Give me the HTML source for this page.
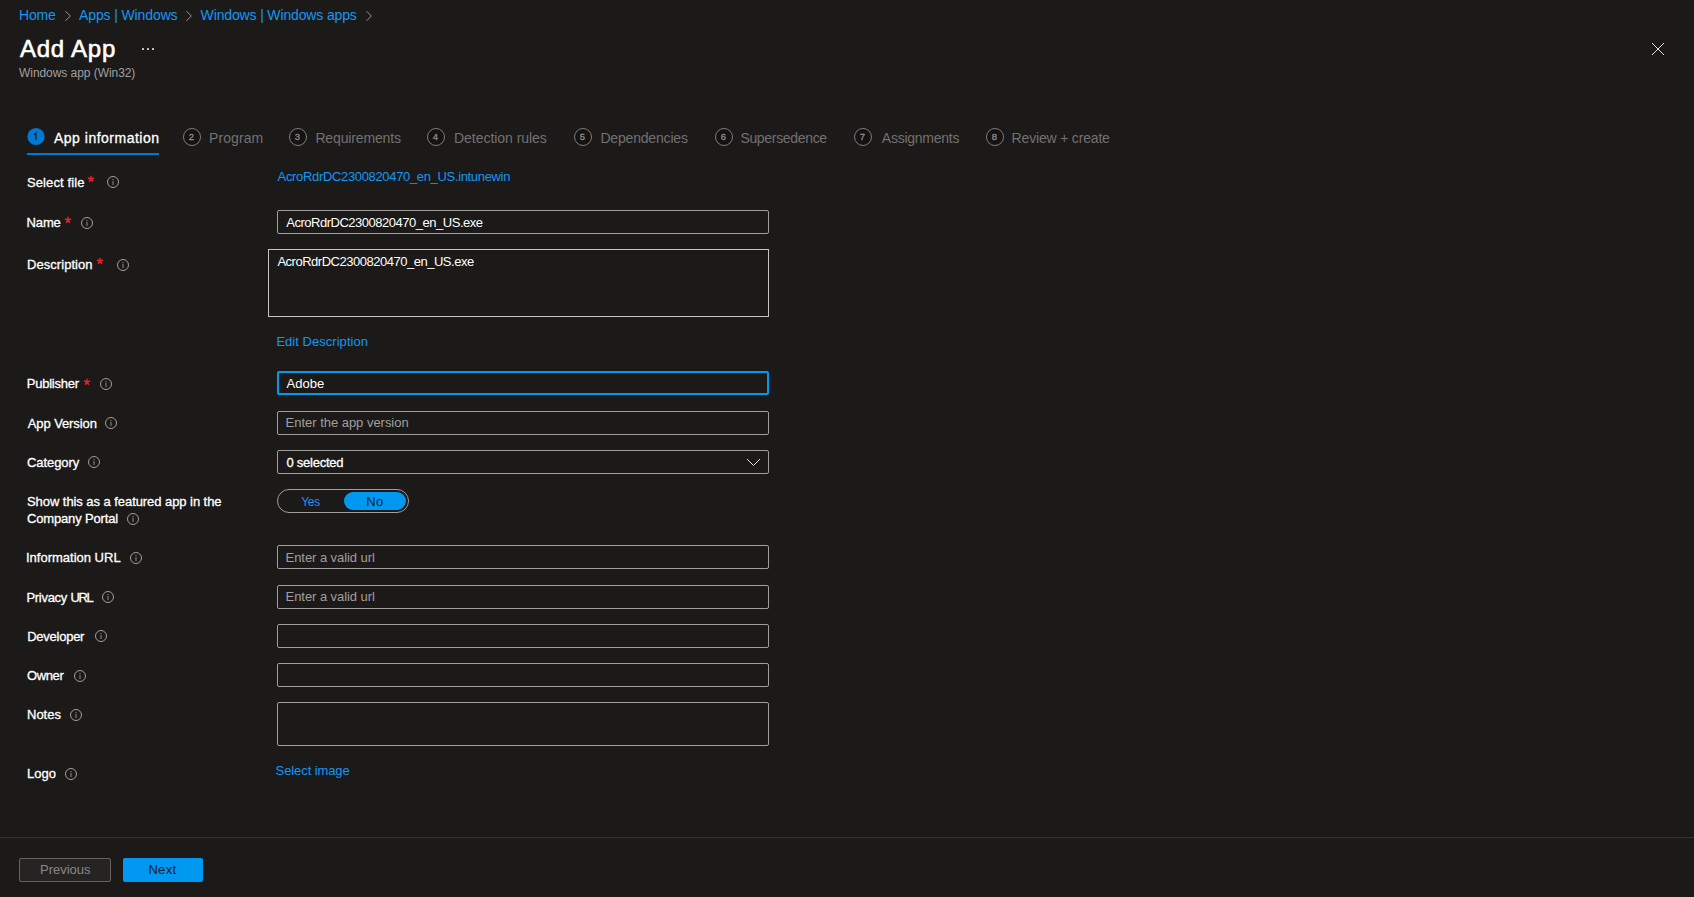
<!DOCTYPE html>
<html><head><meta charset="utf-8">
<style>
html,body{margin:0;padding:0;}
body{width:1694px;height:897px;overflow:hidden;background:#1b1a19;position:relative;font-family:"Liberation Sans",sans-serif;color:#fff;}
.a{position:absolute;box-sizing:content-box;}
.t{position:absolute;white-space:nowrap;line-height:20px;}
</style></head>
<body>
<svg class="a" style="left:64px;top:10px" width="8" height="12" viewBox="0 0 8 12"><path d="M1.5 1.2 L6.3 6 L1.5 10.8" fill="none" stroke="#a8a6a4" stroke-width="0.9"/></svg>
<svg class="a" style="left:185px;top:10px" width="8" height="12" viewBox="0 0 8 12"><path d="M1.5 1.2 L6.3 6 L1.5 10.8" fill="none" stroke="#a8a6a4" stroke-width="0.9"/></svg>
<svg class="a" style="left:365px;top:10px" width="8" height="12" viewBox="0 0 8 12"><path d="M1.5 1.2 L6.3 6 L1.5 10.8" fill="none" stroke="#a8a6a4" stroke-width="0.9"/></svg>
<div class="a" style="left:142px;top:48px;width:12px;height:2px;">
 <span style="position:absolute;left:0;top:0;width:1.6px;height:1.8px;background:#d0cecc;border-radius:0.5px"></span>
 <span style="position:absolute;left:5px;top:0;width:1.6px;height:1.8px;background:#d0cecc;border-radius:0.5px"></span>
 <span style="position:absolute;left:10px;top:0;width:1.6px;height:1.8px;background:#d0cecc;border-radius:0.5px"></span>
</div>
<svg class="a" style="left:1651px;top:42px" width="14" height="14" viewBox="0 0 14 14"><path d="M1 1 L13 13 M13 1 L1 13" stroke="#e1dfdd" stroke-width="1" fill="none"/></svg>
<svg class="a" style="left:26px;top:127px" width="20" height="20" viewBox="0 0 20 20"><circle cx="10" cy="9.5" r="8.6" fill="#0078d4"/><path d="M7.9 7.8 L9.8 6.1 L9.8 13" fill="none" stroke="#1b1a19" stroke-width="1.3"/></svg>
<div class="a" style="left:27px;top:153px;width:132px;height:2px;background:#0078d4"></div>
<div class="a" style="left:183px;top:128px;width:16px;height:16px;border:1px solid #7f7d7b;background:#141312;border-radius:50%"></div>
<div class="t" style="left:182.5px;top:126.6px;width:18px;text-align:center;font-size:9.5px;font-weight:400;-webkit-text-stroke:0.3px #8f8d8b;color:#8f8d8b">2</div>
<div class="a" style="left:289px;top:128px;width:16px;height:16px;border:1px solid #7f7d7b;background:#141312;border-radius:50%"></div>
<div class="t" style="left:288.5px;top:126.6px;width:18px;text-align:center;font-size:9.5px;font-weight:400;-webkit-text-stroke:0.3px #8f8d8b;color:#8f8d8b">3</div>
<div class="a" style="left:427px;top:128px;width:16px;height:16px;border:1px solid #7f7d7b;background:#141312;border-radius:50%"></div>
<div class="t" style="left:426.5px;top:126.6px;width:18px;text-align:center;font-size:9.5px;font-weight:400;-webkit-text-stroke:0.3px #8f8d8b;color:#8f8d8b">4</div>
<div class="a" style="left:574px;top:128px;width:16px;height:16px;border:1px solid #7f7d7b;background:#141312;border-radius:50%"></div>
<div class="t" style="left:573.5px;top:126.6px;width:18px;text-align:center;font-size:9.5px;font-weight:400;-webkit-text-stroke:0.3px #8f8d8b;color:#8f8d8b">5</div>
<div class="a" style="left:715px;top:128px;width:16px;height:16px;border:1px solid #7f7d7b;background:#141312;border-radius:50%"></div>
<div class="t" style="left:714.5px;top:126.6px;width:18px;text-align:center;font-size:9.5px;font-weight:400;-webkit-text-stroke:0.3px #8f8d8b;color:#8f8d8b">6</div>
<div class="a" style="left:854px;top:128px;width:16px;height:16px;border:1px solid #7f7d7b;background:#141312;border-radius:50%"></div>
<div class="t" style="left:853.5px;top:126.6px;width:18px;text-align:center;font-size:9.5px;font-weight:400;-webkit-text-stroke:0.3px #8f8d8b;color:#8f8d8b">7</div>
<div class="a" style="left:986px;top:128px;width:16px;height:16px;border:1px solid #7f7d7b;background:#141312;border-radius:50%"></div>
<div class="t" style="left:985.5px;top:126.6px;width:18px;text-align:center;font-size:9.5px;font-weight:400;-webkit-text-stroke:0.3px #8f8d8b;color:#8f8d8b">8</div>
<div class="a" style="left:277px;top:210px;width:490px;height:22px;border:1px solid #a19f9d;border-radius:2px;background:transparent"></div>
<div class="a" style="left:268px;top:249px;width:499px;height:66px;border:1px solid #c8c6c4;border-radius:0px;background:transparent"></div>
<div class="a" style="left:277px;top:371px;width:488px;height:20px;border:2px solid #0099ee;border-radius:2px;background:transparent"></div>
<div class="a" style="left:277px;top:411px;width:490px;height:22px;border:1px solid #a19f9d;border-radius:2px;background:transparent"></div>
<div class="a" style="left:277px;top:450px;width:490px;height:22px;border:1px solid #a19f9d;border-radius:2px;background:transparent"></div>
<svg class="a" style="left:745px;top:457px" width="17" height="11" viewBox="0 0 17 11"><path d="M2 2 L8.5 8.5 L15 2" fill="none" stroke="#e1dfdd" stroke-width="1"/></svg>
<div class="a" style="left:277px;top:489px;width:130px;height:22px;border:1px solid #a19f9d;border-radius:12px;background:transparent"></div>
<div class="a" style="left:344px;top:492px;width:62px;height:18px;border-radius:9px;background:#0098f0"></div>
<div class="a" style="left:277px;top:545px;width:490px;height:22px;border:1px solid #a19f9d;border-radius:2px;background:transparent"></div>
<div class="a" style="left:277px;top:585px;width:490px;height:22px;border:1px solid #a19f9d;border-radius:2px;background:transparent"></div>
<div class="a" style="left:277px;top:624px;width:490px;height:22px;border:1px solid #a19f9d;border-radius:2px;background:transparent"></div>
<div class="a" style="left:277px;top:663px;width:490px;height:22px;border:1px solid #a19f9d;border-radius:2px;background:transparent"></div>
<div class="a" style="left:277px;top:702px;width:490px;height:42px;border:1px solid #a19f9d;border-radius:2px;background:transparent"></div>
<svg class="a" style="left:107px;top:176px" width="12" height="12" viewBox="0 0 12 12"><circle cx="6" cy="6" r="5.5" fill="none" stroke="#a19f9d" stroke-width="1"/><rect x="5.25" y="5" width="1.5" height="4" fill="#686664"/><rect x="5.25" y="3" width="1.5" height="1.2" fill="#686664"/></svg>
<svg class="a" style="left:81px;top:217px" width="12" height="12" viewBox="0 0 12 12"><circle cx="6" cy="6" r="5.5" fill="none" stroke="#a19f9d" stroke-width="1"/><rect x="5.25" y="5" width="1.5" height="4" fill="#686664"/><rect x="5.25" y="3" width="1.5" height="1.2" fill="#686664"/></svg>
<svg class="a" style="left:117px;top:259px" width="12" height="12" viewBox="0 0 12 12"><circle cx="6" cy="6" r="5.5" fill="none" stroke="#a19f9d" stroke-width="1"/><rect x="5.25" y="5" width="1.5" height="4" fill="#686664"/><rect x="5.25" y="3" width="1.5" height="1.2" fill="#686664"/></svg>
<svg class="a" style="left:100px;top:378px" width="12" height="12" viewBox="0 0 12 12"><circle cx="6" cy="6" r="5.5" fill="none" stroke="#a19f9d" stroke-width="1"/><rect x="5.25" y="5" width="1.5" height="4" fill="#686664"/><rect x="5.25" y="3" width="1.5" height="1.2" fill="#686664"/></svg>
<svg class="a" style="left:105px;top:417px" width="12" height="12" viewBox="0 0 12 12"><circle cx="6" cy="6" r="5.5" fill="none" stroke="#a19f9d" stroke-width="1"/><rect x="5.25" y="5" width="1.5" height="4" fill="#686664"/><rect x="5.25" y="3" width="1.5" height="1.2" fill="#686664"/></svg>
<svg class="a" style="left:88px;top:456px" width="12" height="12" viewBox="0 0 12 12"><circle cx="6" cy="6" r="5.5" fill="none" stroke="#a19f9d" stroke-width="1"/><rect x="5.25" y="5" width="1.5" height="4" fill="#686664"/><rect x="5.25" y="3" width="1.5" height="1.2" fill="#686664"/></svg>
<svg class="a" style="left:127px;top:513px" width="12" height="12" viewBox="0 0 12 12"><circle cx="6" cy="6" r="5.5" fill="none" stroke="#a19f9d" stroke-width="1"/><rect x="5.25" y="5" width="1.5" height="4" fill="#686664"/><rect x="5.25" y="3" width="1.5" height="1.2" fill="#686664"/></svg>
<svg class="a" style="left:130px;top:552px" width="12" height="12" viewBox="0 0 12 12"><circle cx="6" cy="6" r="5.5" fill="none" stroke="#a19f9d" stroke-width="1"/><rect x="5.25" y="5" width="1.5" height="4" fill="#686664"/><rect x="5.25" y="3" width="1.5" height="1.2" fill="#686664"/></svg>
<svg class="a" style="left:102px;top:591px" width="12" height="12" viewBox="0 0 12 12"><circle cx="6" cy="6" r="5.5" fill="none" stroke="#a19f9d" stroke-width="1"/><rect x="5.25" y="5" width="1.5" height="4" fill="#686664"/><rect x="5.25" y="3" width="1.5" height="1.2" fill="#686664"/></svg>
<svg class="a" style="left:95px;top:630px" width="12" height="12" viewBox="0 0 12 12"><circle cx="6" cy="6" r="5.5" fill="none" stroke="#a19f9d" stroke-width="1"/><rect x="5.25" y="5" width="1.5" height="4" fill="#686664"/><rect x="5.25" y="3" width="1.5" height="1.2" fill="#686664"/></svg>
<svg class="a" style="left:74px;top:670px" width="12" height="12" viewBox="0 0 12 12"><circle cx="6" cy="6" r="5.5" fill="none" stroke="#a19f9d" stroke-width="1"/><rect x="5.25" y="5" width="1.5" height="4" fill="#686664"/><rect x="5.25" y="3" width="1.5" height="1.2" fill="#686664"/></svg>
<svg class="a" style="left:70px;top:709px" width="12" height="12" viewBox="0 0 12 12"><circle cx="6" cy="6" r="5.5" fill="none" stroke="#a19f9d" stroke-width="1"/><rect x="5.25" y="5" width="1.5" height="4" fill="#686664"/><rect x="5.25" y="3" width="1.5" height="1.2" fill="#686664"/></svg>
<svg class="a" style="left:65px;top:768px" width="12" height="12" viewBox="0 0 12 12"><circle cx="6" cy="6" r="5.5" fill="none" stroke="#a19f9d" stroke-width="1"/><rect x="5.25" y="5" width="1.5" height="4" fill="#686664"/><rect x="5.25" y="3" width="1.5" height="1.2" fill="#686664"/></svg>
<svg class="a" style="left:86.0px;top:174.3px" width="10" height="10" viewBox="-5 -5 10 10"><path d="M0 0 L0 -3.3 M0 0 L3.1 -1 M0 0 L1.9 2.7 M0 0 L-1.9 2.7 M0 0 L-3.1 -1" stroke="#e8202a" stroke-width="1.5" fill="none"/></svg>
<svg class="a" style="left:63.0px;top:215.2px" width="10" height="10" viewBox="-5 -5 10 10"><path d="M0 0 L0 -3.3 M0 0 L3.1 -1 M0 0 L1.9 2.7 M0 0 L-1.9 2.7 M0 0 L-3.1 -1" stroke="#e8202a" stroke-width="1.5" fill="none"/></svg>
<svg class="a" style="left:95.4px;top:255.8px" width="10" height="10" viewBox="-5 -5 10 10"><path d="M0 0 L0 -3.3 M0 0 L3.1 -1 M0 0 L1.9 2.7 M0 0 L-1.9 2.7 M0 0 L-3.1 -1" stroke="#e8202a" stroke-width="1.5" fill="none"/></svg>
<svg class="a" style="left:82.0px;top:377.2px" width="10" height="10" viewBox="-5 -5 10 10"><path d="M0 0 L0 -3.3 M0 0 L3.1 -1 M0 0 L1.9 2.7 M0 0 L-1.9 2.7 M0 0 L-3.1 -1" stroke="#e8202a" stroke-width="1.5" fill="none"/></svg>
<div class="a" style="left:0;top:837px;width:1694px;height:1px;background:#343332"></div>
<div class="a" style="left:19px;top:858px;width:90px;height:22px;border:1px solid #656361;background:#252423;border-radius:2px;"></div>
<div class="a" style="left:123px;top:858px;width:80px;height:24px;background:#0098f0;border-radius:2px;"></div>
<div id="bc1" class="t" style="left:19.00px;top:5px;font-size:14px;font-weight:400;color:#1596f4;letter-spacing:-0.167px;">Home</div>
<div id="bc2" class="t" style="left:79.00px;top:5px;font-size:14px;font-weight:400;color:#1596f4;letter-spacing:-0.115px;">Apps | Windows</div>
<div id="bc3" class="t" style="left:200.60px;top:5px;font-size:14px;font-weight:400;color:#1596f4;letter-spacing:-0.143px;">Windows | Windows apps</div>
<div id="title" class="t" style="left:20.00px;top:39px;font-size:24px;font-weight:400;color:#ffffff;letter-spacing:0.749px;-webkit-text-stroke:0.6px #fff;">Add App</div>
<div id="sub" class="t" style="left:19.00px;top:63px;font-size:12px;font-weight:400;color:#a19f9d;letter-spacing:-0.056px;">Windows app (Win32)</div>
<div id="tab1" class="t" style="left:54.00px;top:128px;font-size:14px;font-weight:400;color:#ffffff;letter-spacing:0.500px;-webkit-text-stroke:0.3px #fff;">App information</div>
<div id="tab2" class="t" style="left:209.00px;top:128px;font-size:14px;font-weight:400;color:#737170;letter-spacing:0.083px;">Program</div>
<div id="tab3" class="t" style="left:315.40px;top:128px;font-size:14px;font-weight:400;color:#737170;letter-spacing:-0.138px;">Requirements</div>
<div id="tab4" class="t" style="left:454.00px;top:128px;font-size:14px;font-weight:400;color:#737170;letter-spacing:-0.037px;">Detection rules</div>
<div id="tab5" class="t" style="left:600.40px;top:128px;font-size:14px;font-weight:400;color:#737170;letter-spacing:-0.179px;">Dependencies</div>
<div id="tab6" class="t" style="left:740.40px;top:128px;font-size:14px;font-weight:400;color:#737170;letter-spacing:-0.320px;">Supersedence</div>
<div id="tab7" class="t" style="left:881.80px;top:128px;font-size:14px;font-weight:400;color:#737170;letter-spacing:-0.250px;">Assignments</div>
<div id="tab8" class="t" style="left:1011.60px;top:128px;font-size:14px;font-weight:400;color:#737170;letter-spacing:-0.177px;">Review + create</div>
<div id="l1" class="t" style="left:27.00px;top:173px;font-size:13px;font-weight:400;color:#ffffff;letter-spacing:0.100px;-webkit-text-stroke:0.3px #fff;">Select file</div>
<div id="l2" class="t" style="left:26.60px;top:213px;font-size:13px;font-weight:400;color:#ffffff;letter-spacing:-0.165px;-webkit-text-stroke:0.3px #fff;">Name</div>
<div id="l3" class="t" style="left:27.00px;top:255px;font-size:13px;font-weight:400;color:#ffffff;letter-spacing:0.050px;-webkit-text-stroke:0.3px #fff;">Description</div>
<div id="l4" class="t" style="left:26.80px;top:374px;font-size:13px;font-weight:400;color:#ffffff;letter-spacing:-0.250px;-webkit-text-stroke:0.3px #fff;">Publisher</div>
<div id="l5" class="t" style="left:27.80px;top:414px;font-size:13px;font-weight:400;color:#ffffff;letter-spacing:-0.100px;-webkit-text-stroke:0.3px #fff;">App Version</div>
<div id="l6" class="t" style="left:27.00px;top:453px;font-size:13px;font-weight:400;color:#ffffff;letter-spacing:-0.076px;-webkit-text-stroke:0.3px #fff;">Category</div>
<div id="l7" class="t" style="left:27.00px;top:492px;font-size:13px;font-weight:400;color:#ffffff;letter-spacing:-0.061px;-webkit-text-stroke:0.3px #fff;">Show this as a featured app in the</div>
<div id="l8" class="t" style="left:27.00px;top:509px;font-size:13px;font-weight:400;color:#ffffff;letter-spacing:-0.159px;-webkit-text-stroke:0.3px #fff;">Company Portal</div>
<div id="l9" class="t" style="left:26.00px;top:548px;font-size:13px;font-weight:400;color:#ffffff;letter-spacing:-0.003px;-webkit-text-stroke:0.3px #fff;">Information URL</div>
<div id="l10" class="t" style="left:26.40px;top:588px;font-size:13px;font-weight:400;color:#ffffff;letter-spacing:-0.283px;-webkit-text-stroke:0.3px #fff;">Privacy</div>
<div id="l10b" class="t" style="left:70.60px;top:588px;font-size:13px;font-weight:400;color:#ffffff;letter-spacing:-1.400px;-webkit-text-stroke:0.3px #fff;">URL</div>
<div id="l11" class="t" style="left:27.20px;top:627px;font-size:13px;font-weight:400;color:#ffffff;letter-spacing:-0.250px;-webkit-text-stroke:0.3px #fff;">Developer</div>
<div id="l12" class="t" style="left:27.00px;top:666px;font-size:13px;font-weight:400;color:#ffffff;letter-spacing:-0.375px;-webkit-text-stroke:0.3px #fff;">Owner</div>
<div id="l13" class="t" style="left:27.00px;top:705px;font-size:13px;font-weight:400;color:#ffffff;letter-spacing:-0.000px;-webkit-text-stroke:0.3px #fff;">Notes</div>
<div id="l14" class="t" style="left:27.00px;top:764px;font-size:13px;font-weight:400;color:#ffffff;letter-spacing:0.000px;-webkit-text-stroke:0.3px #fff;">Logo</div>
<div id="v1" class="t" style="left:277.60px;top:167px;font-size:13px;font-weight:400;color:#1596f4;letter-spacing:-0.338px;">AcroRdrDC2300820470_en_US.intunewin</div>
<div id="v2" class="t" style="left:286.20px;top:213px;font-size:13px;font-weight:400;color:#ffffff;letter-spacing:-0.480px;">AcroRdrDC2300820470_en_US.exe</div>
<div id="v3" class="t" style="left:277.40px;top:252px;font-size:13px;font-weight:400;color:#ffffff;letter-spacing:-0.483px;">AcroRdrDC2300820470_en_US.exe</div>
<div id="v4" class="t" style="left:276.40px;top:332px;font-size:13px;font-weight:400;color:#1596f4;letter-spacing:0.034px;">Edit Description</div>
<div id="v5" class="t" style="left:286.60px;top:374px;font-size:13px;font-weight:400;color:#ffffff;letter-spacing:-0.000px;">Adobe</div>
<div id="v6" class="t" style="left:285.60px;top:413px;font-size:13px;font-weight:400;color:#a19f9d;letter-spacing:-0.025px;">Enter the app version</div>
<div id="v7" class="t" style="left:286.40px;top:453px;font-size:13px;font-weight:400;color:#ffffff;letter-spacing:-0.228px;-webkit-text-stroke:0.3px #fff;">0 selected</div>
<div id="v8" class="t" style="left:301.20px;top:492px;font-size:12px;font-weight:400;color:#1596f4;letter-spacing:-0.250px;">Yes</div>
<div id="v9" class="t" style="left:366.20px;top:492px;font-size:13px;font-weight:400;color:#1b1a19;letter-spacing:0.300px;">No</div>
<div id="v10" class="t" style="left:285.60px;top:548px;font-size:13px;font-weight:400;color:#a19f9d;letter-spacing:-0.066px;">Enter a valid url</div>
<div id="v11" class="t" style="left:285.60px;top:587px;font-size:13px;font-weight:400;color:#a19f9d;letter-spacing:-0.066px;">Enter a valid url</div>
<div id="v12" class="t" style="left:275.60px;top:761px;font-size:13px;font-weight:400;color:#1596f4;letter-spacing:-0.094px;">Select image</div>
<div id="b1" class="t" style="left:40.00px;top:860px;font-size:13px;font-weight:400;color:#8a8886;letter-spacing:-0.003px;">Previous</div>
<div id="b2" class="t" style="left:148.40px;top:860px;font-size:13px;font-weight:400;color:#1b1a19;letter-spacing:0.336px;">Next</div>
</body></html>
